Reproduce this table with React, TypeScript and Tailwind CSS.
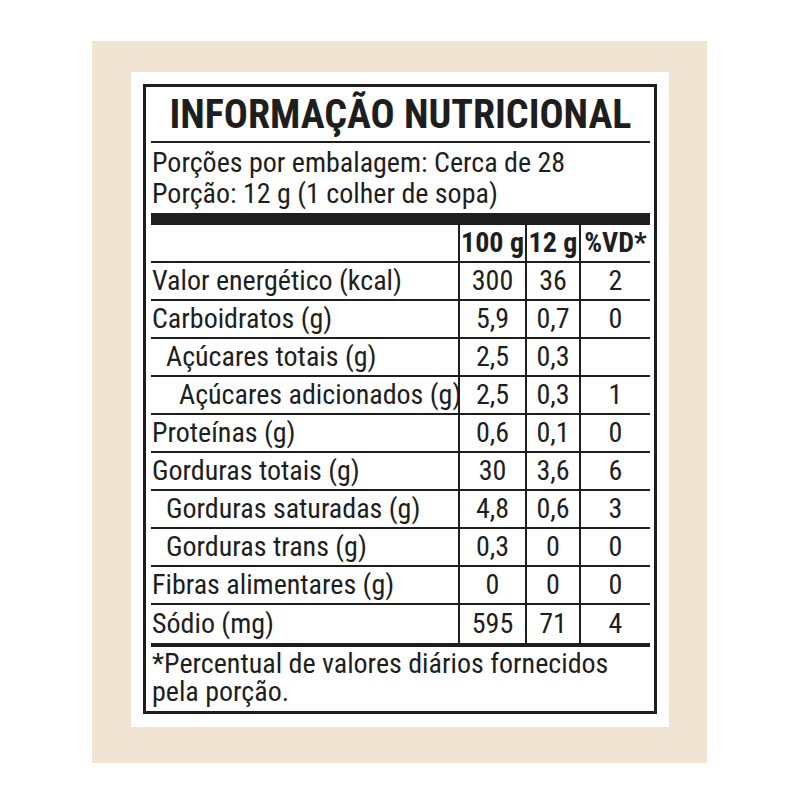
import React from 'react'

type Row = {
  label: string
  indent?: 0 | 1 | 2
  g100: string
  g12: string
  vd: string
}

const rows: Row[] = [
  { label: 'Valor energético (kcal)', g100: '300', g12: '36', vd: '2' },
  { label: 'Carboidratos (g)', g100: '5,9', g12: '0,7', vd: '0' },
  { label: 'Açúcares totais (g)', indent: 1, g100: '2,5', g12: '0,3', vd: '' },
  { label: 'Açúcares adicionados (g)', indent: 2, g100: '2,5', g12: '0,3', vd: '1' },
  { label: 'Proteínas (g)', g100: '0,6', g12: '0,1', vd: '0' },
  { label: 'Gorduras totais (g)', g100: '30', g12: '3,6', vd: '6' },
  { label: 'Gorduras saturadas (g)', indent: 1, g100: '4,8', g12: '0,6', vd: '3' },
  { label: 'Gorduras trans (g)', indent: 1, g100: '0,3', g12: '0', vd: '0' },
  { label: 'Fibras alimentares (g)', g100: '0', g12: '0', vd: '0' },
  { label: 'Sódio (mg)', g100: '595', g12: '71', vd: '4' },
]

const indentClass = {
  0: 'pl-[1px]',
  1: 'pl-[15px]',
  2: 'pl-[28px]',
}

const TableRow = ({ row, last }: { row: Row; last: boolean }) => (
  <div
    className={`flex items-center whitespace-nowrap border-[#1e1e1e] ${last ? 'h-[42px] border-b-[4px]' : 'h-[38px] border-b-2'}`}
  >
    <div className={`w-[309px] h-full flex items-center border-r-2 border-[#1e1e1e] ${indentClass[row.indent ?? 0]}`}>
      {row.label}
    </div>
    <div className="w-[67px] h-full flex items-center justify-center border-r-2 border-[#1e1e1e]">{row.g100}</div>
    <div className="w-[54px] h-full flex items-center justify-center border-r-2 border-[#1e1e1e]">{row.g12}</div>
    <div className="flex-1 h-full flex items-center justify-center">{row.vd}</div>
  </div>
)

export default function App() {
  return (
    <div className="w-[800px] h-[800px] bg-white pt-[41px] pl-[92px] font-['Roboto_Condensed','Liberation_Sans',sans-serif] text-[#1e1e1e]">
      <div className="w-[615px] h-[722px] bg-[#f1e4d3] pl-[39px] pt-[31px]">
        <div className="w-[538px] h-[655px] bg-white p-[12px]">
          <div className="h-[630px] border-[3px] border-[#1e1e1e] pl-[5px] pr-[4px]">
            {/* title */}
            <div className="h-[56px] border-b-2 border-[#1e1e1e] flex items-center justify-center">
              <h1 className="text-[40px] leading-none font-bold whitespace-nowrap pt-[2px]">INFORMAÇÃO NUTRICIONAL</h1>
            </div>
            <div className="text-[28px] leading-[31px] pt-[4px] pb-[4px] pl-[1px] whitespace-nowrap">
              <p>Porções por embalagem: Cerca de 28</p>
              <p>Porção: 12 g (1 colher de sopa)</p>
            </div>
            <div className="h-[12px] bg-[#1e1e1e]" />

            {/* table */}
            <div className="text-[28px] leading-none">
              <div className="flex h-[38px] border-b-2 border-[#1e1e1e] font-bold whitespace-nowrap">
                <div className="w-[309px] h-full border-r-2 border-[#1e1e1e]" />
                <div className="w-[67px] h-full flex items-center justify-center border-r-2 border-[#1e1e1e]">100 g</div>
                <div className="w-[54px] h-full flex items-center justify-center border-r-2 border-[#1e1e1e]">12 g</div>
                <div className="flex-1 h-full flex items-center justify-center">%VD*</div>
              </div>
              {rows.map((row, i) => (
                <TableRow key={row.label} row={row} last={i === rows.length - 1} />
              ))}
            </div>

            <div className="text-[28px] leading-[28px] pt-[3px] pl-[1px]">
              <p>*Percentual de valores diários fornecidos</p>
              <p>pela porção.</p>
            </div>
          </div>
        </div>
      </div>
    </div>
  )
}
